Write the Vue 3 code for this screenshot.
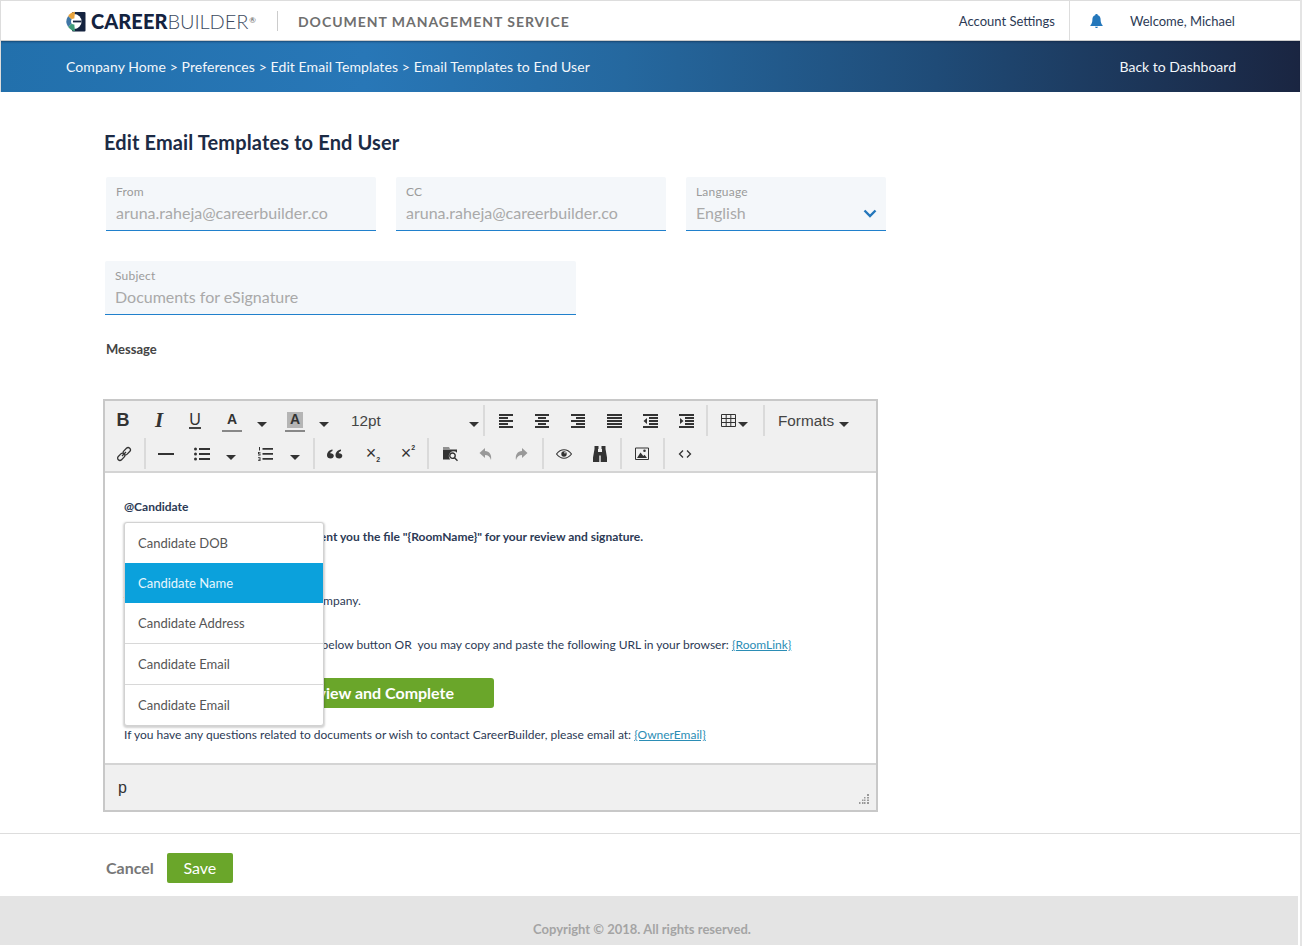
<template>
  <div class="page">
    <header class="topbar">
      <div class="logo">
        <svg class="logo__mark" width="22" height="21" viewBox="0 0 22 21">
          <rect x="8" y="1" width="13.5" height="19.5" rx="1" fill="#14233f" />
          <circle cx="10" cy="10.5" r="7.6" fill="#fff" />
          <path d="M10 10.5 4.2 5A9.8 9.8 0 0 0 4.2 16z" fill="#3f76a6" />
          <path d="M10 10.5 4.2 5A9.8 9.8 0 0 1 11 .8z" fill="#e8a33c" />
          <path d="M10 10.5 4.2 16A9.8 9.8 0 0 0 11 20.2z" fill="#3f9b78" />
          <circle cx="10" cy="10.5" r="3" fill="#fff" />
          <path d="M9 9.6h8.500v1.800H9z" fill="#14233f" />
        </svg>
        <span class="logo__bold">CAREER</span><span class="logo__light">BUILDER</span><sup class="logo__reg">®</sup>
      </div>
      <div class="topbar__divider"></div>
      <div class="topbar__service">DOCUMENT MANAGEMENT SERVICE</div>
      <div class="topbar__right">
        <a class="topbar__account">Account Settings</a>
        <div class="topbar__user">
          <svg class="topbar__bell" width="13" height="14" viewBox="0 0 13 14">
            <path d="M6.500 0C7.300 0 7.800.5 7.800 1.200 9.700 1.800 10.600 3.300 10.600 5.400c0 2.600.6 4.400 2 5.800v.9H.4v-.9c1.400-1.400 2-3.200 2-5.800 0-2.100.9-3.600 2.800-4.200C5.200.5 5.700 0 6.500 0zM5 12.800h3C7.800 13.600 7.200 14 6.500 14S5.200 13.600 5 12.800z" fill="#2477bb" />
          </svg>
          <span>Welcome, Michael</span>
        </div>
      </div>
    </header>

    <nav class="banner">
      <div class="banner__crumbs">Company Home &gt; Preferences &gt; Edit Email Templates &gt; Email Templates to End User</div>
      <a class="banner__back">Back to Dashboard</a>
    </nav>

    <main class="main">
      <h1 class="main__title">Edit Email Templates to End User</h1>

      <div class="form-row">
        <div class="field field--from">
          <label class="field__label">From</label>
          <div class="field__value">aruna.raheja@careerbuilder.co</div>
        </div>
        <div class="field field--from">
          <label class="field__label">CC</label>
          <div class="field__value">aruna.raheja@careerbuilder.co</div>
        </div>
        <div class="field field--lang">
          <label class="field__label">Language</label>
          <div class="field__value">English</div>
          <svg class="field__chevron" width="14" height="9" viewBox="0 0 14 9">
            <path d="M1.500 1.500 7 7l5.500-5.500" fill="none" stroke="#2477bb" stroke-width="2.4" />
          </svg>
        </div>
      </div>

      <div class="field field--subject">
        <label class="field__label">Subject</label>
        <div class="field__value">Documents for eSignature</div>
      </div>

      <div class="message-label">Message</div>

      <div class="editor">
        <div class="editor__toolbar">
          <div v-for="(row, r) in toolbar" :key="r" class="editor__row">
            <template v-for="(item, i) in row" :key="i">
              <div v-if="item.sep" class="tool-sep" :style="{ width: item.w + 'px' }"><span></span></div>
              <div v-else class="tool" :class="item.cls" :style="{ width: item.w + 'px' }">
                <svg v-if="item.icon" width="16" height="16" viewBox="0 0 16 16">
                  <path v-if="icons[item.icon].fill" :d="icons[item.icon].fill" fill="currentColor" fill-rule="evenodd" />
                  <path v-if="icons[item.icon].line" :d="icons[item.icon].line" fill="none" stroke="currentColor" :stroke-width="icons[item.icon].sw || 1" />
                </svg>
                <span v-if="item.text" class="tool__text">{{ item.text }}<small v-if="item.small" class="tool__small" :class="item.smallCls">{{ item.small }}</small></span>
                <i v-if="item.caret" class="caret"></i>
              </div>
            </template>
          </div>
        </div>

        <div class="editor__content">
          <p class="line"><b>@Candidate</b></p>
          <p class="line line--sent"><b>Aruna Raheja of CareerBuilder has sent you the file "{RoomName}" for your review and signature.</b></p>
          <p class="line line--company">These documents were sent by our company.</p>
          <p class="line line--click">To view the documents, click on the below button <span>OR</span>&nbsp; you may copy and paste the following URL in your browser: <a class="link">{RoomLink}</a></p>
          <div class="review-btn">Review and Complete</div>
          <p class="line line--last">If you have any questions related to documents or wish to contact CareerBuilder, please email at: <a class="link">{OwnerEmail}</a></p>

          <ul class="mention">
            <li v-for="(opt, i) in mentions" :key="i" class="mention__item" :class="{ 'mention__item--active': opt.active, 'mention__item--ruled': opt.ruled }">{{ opt.label }}</li>
          </ul>
        </div>

        <div class="editor__status">
          <span>p</span>
          <svg class="editor__grip" width="10" height="10" viewBox="0 0 10 10">
            <path d="M8 0h2v2H8zM5 3h1.500v1.500H5zM8 3h2v1.500H8zM3 5.500h1.500V7H3zM5 5.500h1.500V7H5zM8 5.500h2V7H8zM0 8h1.500v2H0zM3 8h1.500v2H3zM5 8h1.500v2H5zM8 8h2v2H8z" fill="#999" />
          </svg>
        </div>
      </div>
    </main>

    <div class="actions">
      <a class="actions__cancel">Cancel</a>
      <button class="actions__save">Save</button>
    </div>

    <footer class="footer">Copyright © 2018. All rights reserved.</footer>
  </div>
</template>

<script setup>
const icons = {
  alignLeft: { fill: 'M1 1h14v2H1zM1 4h9v2H1zM1 7h14v2H1zM1 10h9v2H1zM1 13h14v2H1z' },
  alignCenter: { fill: 'M1 1h14v2H1zM4 4h8v2H4zM1 7h14v2H1zM4 10h8v2H4zM1 13h14v2H1z' },
  alignRight: { fill: 'M1 1h14v2H1zM6 4h9v2H6zM1 7h14v2H1zM6 10h9v2H6zM1 13h14v2H1z' },
  justify: { fill: 'M1 1h15v2H1zM1 4h15v2H1zM1 7h15v2H1zM1 10h15v2H1zM1 13h15v2H1z' },
  outdent: { fill: 'M1 1h15v2H1zM7 4h9v2H7zM7 7h9v2H7zM7 10h9v2H7zM1 13h15v2H1zM5 5v6L1.500 8z' },
  indent: { fill: 'M1 1h15v2H1zM7 4h9v2H7zM7 7h9v2H7zM7 10h9v2H7zM1 13h15v2H1zM2 5v6l3.500-3z' },
  table: { line: 'M.5 1.500h14v12H.5zM.5 5.500h14M.5 9.500h14M5.200 1.500v12M9.800 1.500v12' },
  link: { line: 'M5.560 13.700 8.100 11.160A2.300 2.300 0 0 0 4.840 7.900L2.300 10.440A2.300 2.300 0 0 0 5.560 13.700zM11.160 8.100 13.700 5.560A2.300 2.300 0 0 0 10.440 2.300L7.900 4.840A2.300 2.300 0 0 0 11.160 8.100zM6 10l4-4', sw: 1.300 },
  hr: { fill: 'M0 7h16v2H0z' },
  bullets: { fill: 'M0 3a1.500 1.500 0 1 0 3 0a1.500 1.500 0 1 0-3 0zM0 8a1.500 1.500 0 1 0 3 0a1.500 1.500 0 1 0-3 0zM0 13a1.500 1.500 0 1 0 3 0a1.500 1.500 0 1 0-3 0zM5 2h11v2H5zM5 7h11v2H5zM5 12h11v2H5z' },
  numbers: { fill: 'M2 1h1v3.500H2zM1 6h2.500v.8H2v.8h1.500v2H1v-.8h1.600v-.5H1zM1 11.200h2.500v3.800H1v-.8h1.600v-.7H1.400v-.8h1.200v-.7H1zM5.500 2h10.500v1.800H5.500zM5.500 7h10.500v1.800H5.500zM5.500 12h10.500v1.800H5.500z' },
  quote: { fill: 'M0 9.500C0 6.500 2 4 5.500 3.500v1.600C4.200 5.500 3.300 6.400 3.200 7.200 5 7 6.800 8 6.800 9.800 6.800 11.400 5.500 12.500 3.800 12.500 1.500 12.500 0 11.300 0 9.500zM8.500 9.500C8.500 6.500 10.500 4 14 3.500v1.600C12.700 5.500 11.800 6.400 11.700 7.200 13.500 7 15.300 8 15.300 9.800 15.300 11.400 14 12.500 12.300 12.500 10 12.500 8.500 11.300 8.500 9.500z' },
  folder: { fill: 'M1 1.500h6l1 1H1zM1 3.500h14v3.200A4 4 0 0 0 8.200 13.500H1z', line: 'M10.500 7a2.700 2.700 0 1 0 0 5.400a2.700 2.700 0 1 0 0-5.400zM12.500 11.800l3 3', sw: 1.400 },
  undo: { fill: 'M7 2 1.500 7 7 12V9c3 0 5 1.500 6 5C14 9 11.500 5 7 5z' },
  redo: { fill: 'M9 2l5.500 5L9 12V9C6 9 4 10.500 3 14 2 9 4.500 5 9 5z' },
  eye: { fill: 'M8 5.300a2.700 2.700 0 1 0 0 5.400a2.700 2.700 0 1 0 0-5.400zM9 6a.8.8 0 1 0 0 1.600a.8.8 0 1 0 0-1.600z', line: 'M.5 8C3 4.800 5.500 3.800 8 3.800S13 4.800 15.500 8C13 11.200 10.500 12.200 8 12.200S3 11.200 .5 8z', sw: 1.100 },
  binoculars: { fill: 'M2.500 0h4v3h-.5v3h4V3h-.5V0h4v3l1.500 8.500V16H8.700V9.500H7.300V16H1v-4.500L2.500 3z' },
  image: { fill: 'M3 12l3.500-5.500 2.800 3.500 1.300-1.300L13 12zM10.500 3.500a1.300 1.300 0 1 0 0 2.600a1.300 1.300 0 1 0 0-2.600z', line: 'M1.500 2h13v11.500h-13z' },
  code: { line: 'M6 4.500 2.500 8 6 11.500M10 4.500 13.500 8 10 11.500', sw: 1.300 },
}

const alignBtn = (icon) => ({ icon, w: 36 })

const toolbar = [
  [
    { text: 'B', w: 36, cls: 'tool--bold' },
    { text: 'I', w: 36, cls: 'tool--italic' },
    { text: 'U', w: 36, cls: 'tool--under' },
    { text: 'A', w: 38, cls: 'tool--color' },
    { caret: true, w: 21 },
    { text: 'A', w: 46, cls: 'tool--color tool--back' },
    { caret: true, w: 12 },
    { text: '12pt', caret: true, w: 150, cls: 'tool--select' },
    { sep: true, w: 8 },
    alignBtn('alignLeft'),
    alignBtn('alignCenter'),
    alignBtn('alignRight'),
    alignBtn('justify'),
    alignBtn('outdent'),
    alignBtn('indent'),
    { sep: true, w: 6 },
    { icon: 'table', caret: true, w: 46, cls: 'tool--table' },
    { sep: true, w: 16 },
    { text: 'Formats', caret: true, w: 84, cls: 'tool--formats' },
  ],
  [
    { icon: 'link', w: 38 },
    { sep: true, w: 4 },
    { icon: 'hr', w: 38 },
    { icon: 'bullets', w: 34 },
    { caret: true, w: 24 },
    { icon: 'numbers', w: 44 },
    { caret: true, w: 16 },
    { w: 9 },
    { sep: true, w: 4 },
    { icon: 'quote', w: 38 },
    { text: '×', small: '2', smallCls: 'tool__small--sub', w: 34, cls: 'tool--script' },
    { text: '×', small: '2', smallCls: 'tool__small--sup', w: 36, cls: 'tool--script' },
    { sep: true, w: 8 },
    { icon: 'folder', w: 36 },
    { icon: 'undo', w: 36, cls: 'tool--muted' },
    { icon: 'redo', w: 34, cls: 'tool--muted' },
    { sep: true, w: 10 },
    { icon: 'eye', w: 32 },
    { icon: 'binoculars', w: 40 },
    { sep: true, w: 2 },
    { icon: 'image', w: 40 },
    { sep: true, w: 4 },
    { icon: 'code', w: 38 },
  ],
]

const mentions = [
  { label: 'Candidate DOB' },
  { label: 'Candidate Name', active: true },
  { label: 'Candidate Address' },
  { label: 'Candidate Email', ruled: true },
  { label: 'Candidate Email', ruled: true },
]
</script>

<style>
body {
  background: #fff;
}
</style>

<style scoped>
.page {
  width: 1302px;
  height: 946px;
  box-sizing: border-box;
  overflow: hidden;
  font-family: Lato, "Liberation Sans", sans-serif;
  color: #1c2b45;
  border-right: 2px solid #e4e4e4;
}

.topbar {
  display: flex;
  align-items: center;
  height: 41px;
  box-sizing: border-box;
  padding: 1px 0 0 65px;
  border-top: 1px solid #ddd;
  border-left: 1px solid #ddd;
  border-bottom: 1px solid #ccc;
}

.logo {
  display: flex;
  align-items: center;
  width: 211px;
  margin-left: -2px;
  padding-right: 2px;
  box-sizing: content-box;
  color: #14233f;
}

.logo__mark {
  margin-right: 5px;
}

.logo__bold {
  font-size: 20px;
  font-weight: 900;
  letter-spacing: 0.05px;
}

.logo__light {
  font-size: 20px;
  font-weight: 300;
  color: #3b4a60;
  letter-spacing: -0.1px;
}

.logo__reg {
  align-self: flex-start;
  margin: 6px 0 0 1px;
  font-size: 8px;
  color: #555;
}

.topbar__divider {
  width: 1px;
  height: 20px;
  background: #ccc;
}

.topbar__service {
  margin-left: 20px;
  font-size: 14px;
  font-weight: 700;
  letter-spacing: 0.97px;
  color: #6f6f6f;
}

.topbar__right {
  display: flex;
  align-items: center;
  height: 100%;
  margin-left: auto;
  font-size: 13px;
  color: #2c3a55;
}

.topbar__account {
  padding-right: 14px;
}

.topbar__user {
  display: flex;
  align-items: center;
  height: calc(100% + 1px);
  margin-top: -1px;
  width: 231px;
  box-sizing: border-box;
  padding-left: 20px;
  border-left: 1px solid #ddd;
}

.topbar__bell {
  margin-right: 27px;
}

.banner {
  display: flex;
  align-items: center;
  justify-content: space-between;
  height: 51px;
  padding: 0 64px 0 65px;
  box-sizing: border-box;
  font-size: 14px;
  color: #f3f7fb;
  border-left: 1px solid #ddd;
  background: linear-gradient(90deg, #2270ac 0%, #2877b7 28%, #25689f 48%, #1f4b77 72%, #1a2541 100%);
  box-shadow: inset 0 2px 2px -1px rgba(10, 25, 50, 0.45);
}

.banner__crumbs {
  letter-spacing: 0.09px;
}

.main {
  padding-left: 103px;
}

.main__title {
  margin: 0;
  padding: 38px 0 23px 1px;
  font-size: 20px;
  line-height: 24px;
  font-weight: 700;
  letter-spacing: 0.13px;
  color: #1c2b45;
}

.form-row {
  display: flex;
  gap: 20px;
  margin-left: 3px;
  margin-bottom: 30px;
}

.field {
  position: relative;
  box-sizing: border-box;
  height: 54px;
  padding: 8px 10px 0;
  background: #f4f7fa;
  border-bottom: 1px solid #2080cc;
  border-radius: 2px 2px 0 0;
}

.field--from {
  width: 270px;
}

.field--lang {
  width: 200px;
}

.field--subject {
  width: 471px;
  margin-left: 2px;
}

.field__label {
  display: block;
  font-size: 12px;
  line-height: 14px;
  letter-spacing: 0.2px;
  color: #9b9b9b;
}

.field__value {
  margin-top: 3px;
  font-size: 16px;
  line-height: 22px;
  color: #a9a9a9;
}

.field__chevron {
  position: absolute;
  right: 9px;
  top: 32px;
}

.message-label {
  margin: 26px 0 0 3px;
  font-size: 13px;
  line-height: 17px;
  font-weight: 700;
  color: #444;
}

.editor {
  width: 775px;
  box-sizing: border-box;
  margin-top: 41px;
  border: 2px solid #c8c8c8;
  border-top-width: 1px;
  background: #fff;
}

.editor__toolbar {
  box-sizing: border-box;
  height: 73px;
  padding-top: 3px;
  background: #f0f0f0;
  border-top: 1px solid #c8c8c8;
  border-bottom: 2px solid #d4d4d4;
}

.editor__row {
  display: flex;
  height: 33px;
  color: #333;
}

.tool {
  display: flex;
  flex: none;
  align-items: center;
  justify-content: center;
  color: #333;
}

.tool-sep {
  display: flex;
  flex: none;
  justify-content: center;
  align-items: center;
}

.tool-sep span {
  display: block;
  width: 2px;
  height: 31px;
  background: #dadada;
}

.tool__text {
  font-family: "Liberation Sans", sans-serif;
}

.caret {
  width: 0;
  height: 0;
  border-left: 5px solid transparent;
  border-right: 5px solid transparent;
  border-top: 5px solid #333;
  margin-top: 7px;
}

.tool--bold .tool__text {
  font-size: 18px;
  font-weight: 700;
}

.tool--italic .tool__text {
  font-family: "Liberation Serif", serif;
  font-size: 21px;
  font-weight: 700;
  font-style: italic;
}

.tool--under .tool__text {
  font-size: 16px;
  line-height: 14px;
  border-bottom: 2px solid #444;
}

.tool--color .tool__text {
  display: block;
  width: 20px;
  margin-top: 2px;
  padding-bottom: 3px;
  text-align: center;
  font-size: 14px;
  font-weight: 700;
  line-height: 15px;
  border-bottom: 2px solid #888;
}

.tool--back .tool__text {
  background: linear-gradient(#b5b5b5, #b5b5b5) center 0 / 16px 16px no-repeat;
}

.tool--select {
  justify-content: space-between;
  padding: 0 1px 0 21px;
  box-sizing: border-box;
}

.tool--select .tool__text,
.tool--formats .tool__text {
  font-size: 15.300px;
  color: #444;
}

.tool--table {
  justify-content: flex-start;
  gap: 1px;
  padding-left: 11px;
  box-sizing: border-box;
}

.tool--formats {
  justify-content: flex-start;
  gap: 5px;
  padding-left: 6px;
  box-sizing: border-box;
}

.tool--script .tool__text {
  position: relative;
  font-size: 18px;
}

.tool__small {
  position: absolute;
  left: 100%;
  font-size: 7px;
  font-weight: 700;
}

.tool__small--sub {
  bottom: 1px;
}

.tool__small--sup {
  top: 1px;
}

.tool--muted {
  color: #999;
}

.editor__content {
  position: relative;
  box-sizing: border-box;
  height: 290px;
  padding: 26px 20px 0 19px;
  font-size: 12px;
  color: #2c3a55;
  background: #fff;
}

.line {
  margin: 0;
  line-height: 15px;
  white-space: nowrap;
}

.line b {
  font-weight: 700;
}

.line--sent {
  margin-top: 15px;
  margin-left: 5px;
}

.line--company {
  margin-top: 49px;
}

.line--click {
  margin-top: 29px;
  margin-left: 7px;
}

.line--last {
  margin-top: 19px;
}

.link {
  color: #2b8db5;
  text-decoration: underline;
}

.review-btn {
  width: 370px;
  height: 30px;
  box-sizing: border-box;
  margin-top: 26px;
  padding-right: 40px;
  text-align: right;
  font-size: 16px;
  font-weight: 700;
  line-height: 30px;
  color: #fff;
  background: #6aa62a;
  border-radius: 3px;
}

.mention {
  position: absolute;
  left: 19px;
  top: 49px;
  width: 200px;
  box-sizing: border-box;
  margin: 0;
  padding: 0;
  list-style: none;
  background: #fff;
  border: 1px solid #d2d2d2;
  border-radius: 3px;
  box-shadow: 0 1px 2px 1px rgba(0, 0, 0, 0.18);
}

.mention__item {
  box-sizing: border-box;
  height: 40px;
  padding-left: 13px;
  font-size: 13px;
  line-height: 41px;
  color: #555;
}

.mention__item--active {
  color: #e8f6fd;
  background: #0ba1dc;
}

.mention__item--ruled {
  height: 41px;
  border-top: 1px solid #d8d8d8;
}

.editor__status {
  position: relative;
  box-sizing: border-box;
  height: 47px;
  padding: 14px 0 0 13px;
  font-family: "Liberation Sans", sans-serif;
  font-size: 16px;
  color: #333;
  background: #f0f0f0;
  border-top: 2px solid #d4d4d4;
}

.editor__grip {
  position: absolute;
  right: 7px;
  bottom: 6px;
}

.actions {
  display: flex;
  align-items: center;
  box-sizing: border-box;
  height: 63px;
  margin-top: 21px;
  padding: 5px 0 0 106px;
  border-top: 1px solid #ddd;
}

.actions__cancel {
  font-size: 16px;
  font-weight: 700;
  color: #777;
}

.actions__save {
  width: 66px;
  height: 30px;
  margin-left: 13px;
  padding: 0;
  border: none;
  border-radius: 2px;
  font-family: inherit;
  font-size: 16px;
  color: #fff;
  background: #6aa62a;
}

.footer {
  width: 1298px;
  height: 49px;
  box-sizing: border-box;
  padding: 25px 14px 0 0;
  text-align: center;
  font-size: 13px;
  line-height: 17px;
  font-weight: 700;
  color: #a4a4a4;
  background: #e4e4e4;
}
</style>
